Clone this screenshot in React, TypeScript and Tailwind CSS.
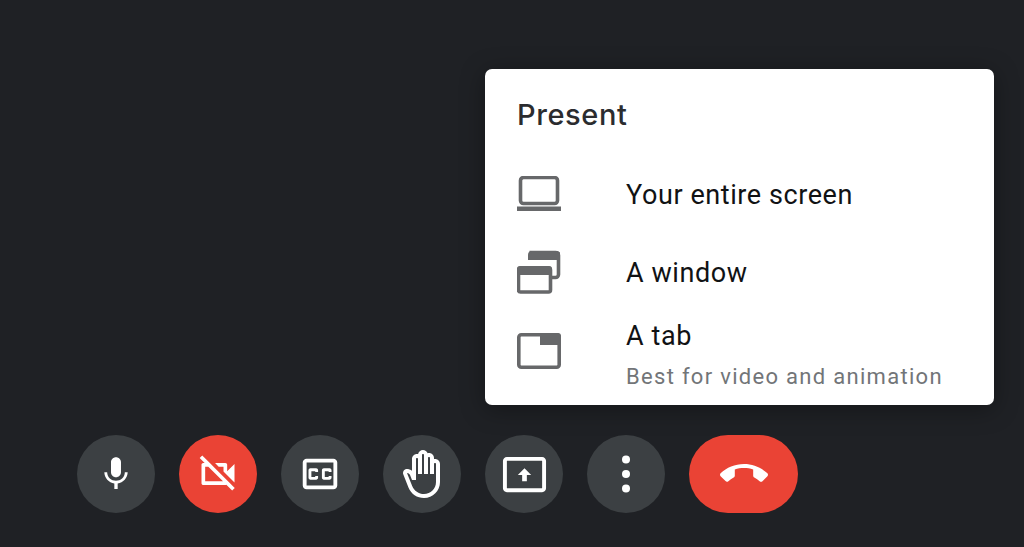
export default function App() {
  const round = "flex h-[78px] w-[78px] items-center justify-center rounded-full text-white";
  return (
    <div className="h-[547px] w-[1024px] overflow-hidden bg-[#1f2125] pt-[69px] font-['Roboto',sans-serif]">
      <div className="ml-[485px] h-[336px] w-[509px] rounded-[7px] bg-white pl-[32px] text-[#111214] shadow-[0_4px_24px_rgba(0,0,0,0.35)]">
        <div className="flex h-[86px] items-center pt-[5px] font-['Inter',sans-serif] text-[29px] font-medium tracking-[0.6px] text-[#2b2c2f]">
          Present
        </div>
        <div className="flex h-[78px] items-center">
          <div className="w-[109px] shrink-0">
            <svg width="44" height="36" viewBox="0 0 44 36" className="block">
              <rect x="3.5" y="1.5" width="37" height="26" rx="3" fill="none" stroke="#67686a" strokeWidth="3.6" />
              <rect x="0" y="30.5" width="44" height="4.5" fill="#67686a" />
            </svg>
          </div>
          <div className="pt-[2px] text-[27px] tracking-[0.58px]">Your entire screen</div>
        </div>
        <div className="flex h-[78px] items-center">
          <div className="w-[109px] shrink-0">
            <svg width="44" height="44" viewBox="0 0 44 44" className="block">
              <path d="M12.5 2.5h26a3 3 0 0 1 3 3v19a3 3 0 0 1-3 3h-4.5" fill="none" stroke="#67686a" strokeWidth="3.6" />
              <path d="M11 5a4 4 0 0 1 4-4h25a4 4 0 0 1 3 1.5V10H11z" fill="#67686a" />
              <path d="M3.5 18h28a2 2 0 0 1 2 2v20a2 2 0 0 1-2 2h-28a2 2 0 0 1-2-2V20a2 2 0 0 1 2-2z" fill="#ffffff" stroke="#67686a" strokeWidth="3.6" />
              <rect x="0" y="16" width="35" height="9" rx="3" fill="#67686a" />
            </svg>
          </div>
          <div className="pt-[2px] text-[27px] tracking-[0.58px]">A window</div>
        </div>
        <div className="flex h-[94px] items-start">
          <div className="w-[109px] shrink-0 pt-[22px]">
            <svg width="44" height="36" viewBox="0 0 44 36" className="block">
              <rect x="1.8" y="1.8" width="40.4" height="32.4" rx="2.5" fill="none" stroke="#67686a" strokeWidth="3.6" />
              <path d="M23 0h18a3 3 0 0 1 3 3v9H23z" fill="#67686a" />
            </svg>
          </div>
          <div>
            <div className="pt-[10px] text-[27px] leading-[30px] tracking-[0.58px]">A tab</div>
            <div className="mt-[12px] text-[22px] leading-[28px] tracking-[1.3px] text-[#727578]">
              Best for video and animation
            </div>
          </div>
        </div>
      </div>

      <div className="ml-[77px] mt-[30px] flex items-center gap-[24px]">
        <div className={`${round} bg-[#3c4043]`}>
          <svg width="40" height="40" viewBox="0 0 24 24" fill="currentColor">
            <path d="M12 14c1.66 0 2.99-1.34 2.99-3L15 5c0-1.66-1.34-3-3-3S9 3.34 9 5v6c0 1.66 1.34 3 3 3zm5.3-3c0 3-2.54 5.1-5.3 5.1S6.7 14 6.7 11H5c0 3.41 2.72 6.23 6 6.72V21h2v-3.28c3.28-.48 6-3.3 6-6.72h-1.7z" />
          </svg>
        </div>
        <div className={`${round} bg-[#ea4335]`}>
          <svg width="44" height="44" viewBox="0 0 24 24" fill="currentColor">
            <path d="M9.56 8l-2-2-4.15-4.14L2 3.27 4.73 6H4c-.55 0-1 .45-1 1v10c0 .55.45 1 1 1h12c.21 0 .39-.08.55-.18L19.73 21l1.41-1.41-8.86-8.86L9.56 8zM5 16V8h1.73l8 8H5zm10-8v2.61l6 6V6.5l-4 4V7c0-.55-.45-1-1-1h-5.61l2 2H15z" />
          </svg>
        </div>
        <div className={`${round} bg-[#3c4043]`}>
          <svg width="46" height="46" viewBox="0 0 24 24" fill="currentColor">
            <path d="M19 4H5c-1.11 0-2 .9-2 2v12c0 1.1.89 2 2 2h14c1.1 0 2-.9 2-2V6c0-1.1-.9-2-2-2zm0 14H5V6h14v12zM7 15h3c.55 0 1-.45 1-1v-1H9.5v.5h-2v-3h2v.5H11v-1c0-.55-.45-1-1-1H7c-.55 0-1 .45-1 1v4c0 .55.45 1 1 1zm7 0h3c.55 0 1-.45 1-1v-1h-1.5v.5h-2v-3h2v.5H18v-1c0-.55-.45-1-1-1h-3c-.55 0-1 .45-1 1v4c0 .55.45 1 1 1z" />
          </svg>
        </div>
        <div className={`${round} bg-[#3c4043]`}>
          <svg width="48" height="48" viewBox="0 0 24 24" fill="currentColor">
            <path d="M21 7c0-1.38-1.12-2.5-2.5-2.5-.17 0-.34.02-.5.05V4c0-1.38-1.12-2.5-2.5-2.5-.23 0-.46.03-.67.09C14.46.66 13.56 0 12.5 0c-1.23 0-2.25.89-2.46 2.06C9.87 2.02 9.69 2 9.5 2 8.12 2 7 3.12 7 4.5v5.89c-.34-.31-.76-.54-1.22-.66L5.01 9.52c-.83-.23-1.7.09-2.19.83-.38.57-.4 1.31-.15 1.95l2.56 6.43C6.49 21.91 9.57 24 13 24c4.42 0 8-3.58 8-8V7zm-2 9c0 3.31-2.69 6-6 6-2.61 0-4.95-1.59-5.91-4.01l-2.6-6.54.53.14c.46.12.83.46 1 .9L7 15h2V4.5c0-.28.22-.5.5-.5s.5.22.5.5V12h2V2.5c0-.28.22-.5.5-.5s.5.22.5.5V12h2V4c0-.28.22-.5.5-.5s.5.22.5.5v8h2V7c0-.28.22-.5.5-.5s.5.22.5.5v9z" />
          </svg>
        </div>
        <div className={`${round} bg-[#3c4043]`}>
          <svg width="47" height="47" viewBox="0 0 24 24" fill="currentColor">
            <path d="M21 3H3c-1.11 0-2 .89-2 2v14c0 1.11.89 2 2 2h18c1.11 0 2-.89 2-2V5c0-1.11-.89-2-2-2zm0 16.02H3V4.98h18v14.04zM12 8.8l3.4 3.4h-2.2v3.2h-2.4v-3.2H8.6z" />
          </svg>
        </div>
        <div className={`${round} bg-[#3c4043]`}>
          <svg width="10" height="38" viewBox="0 0 10 38" fill="currentColor">
            <circle cx="5" cy="4.5" r="4" />
            <circle cx="5" cy="19" r="4" />
            <circle cx="5" cy="33.5" r="4" />
          </svg>
        </div>
        <div className="flex h-[78px] w-[109px] items-center justify-center rounded-full bg-[#ea4335] text-white">
          <svg width="48" height="48" viewBox="0 0 24 24" fill="currentColor">
            <path d="M12 9c-1.6 0-3.15.25-4.6.72v3.1c0 .39-.23.74-.56.9-.98.49-1.87 1.12-2.66 1.85-.18.18-.43.28-.7.28-.28 0-.53-.11-.71-.29L.29 13.08c-.18-.17-.29-.42-.29-.7 0-.28.11-.53.29-.71C3.34 8.78 7.46 7 12 7s8.66 1.78 11.71 4.67c.18.18.29.43.29.71 0 .28-.11.53-.29.71l-2.48 2.48c-.18.18-.43.29-.71.29-.27 0-.52-.11-.7-.28-.79-.74-1.69-1.36-2.67-1.85-.33-.16-.56-.5-.56-.9v-3.1C15.15 9.25 13.6 9 12 9z" />
          </svg>
        </div>
      </div>
    </div>
  );
}
